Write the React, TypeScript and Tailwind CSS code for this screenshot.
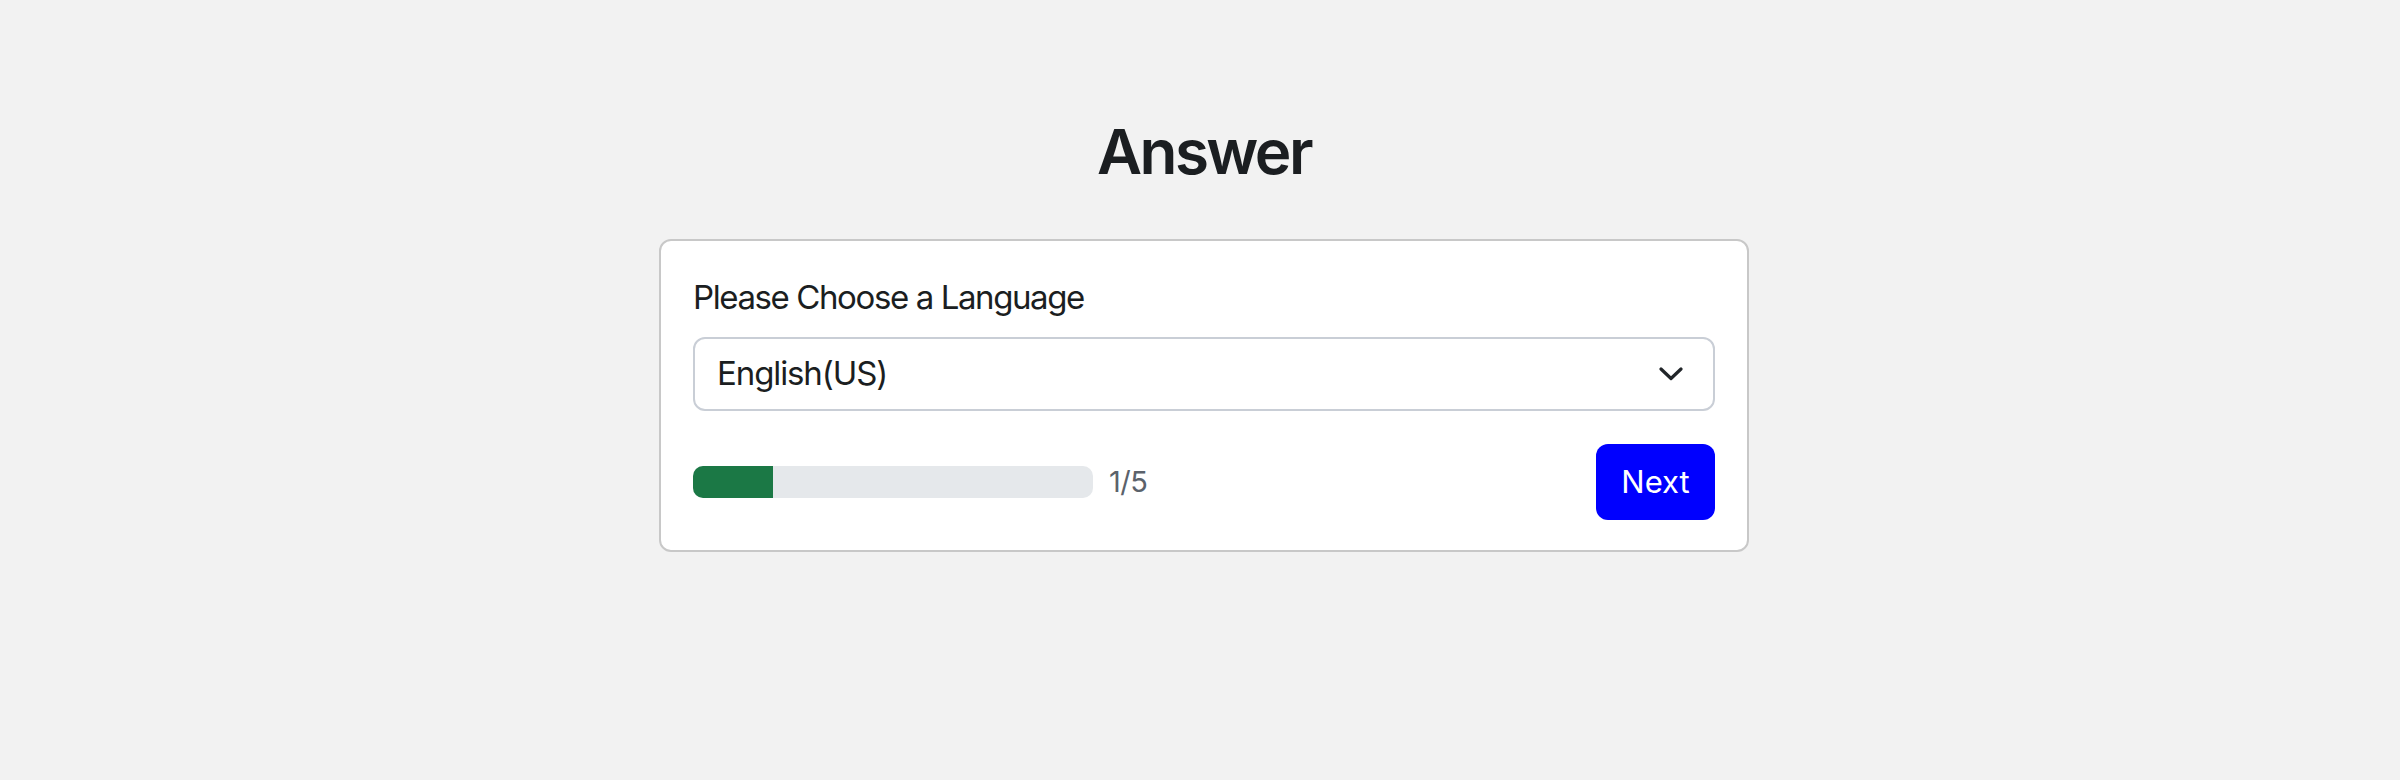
import React from "react";

export default function App() {
  const progress = 1 / 5;
  return (
    <div className="min-h-screen w-full bg-[#f2f2f2] pl-[8px]" style={{ fontFamily: "Inter, 'Liberation Sans', sans-serif" }}>
      <div className="flex flex-col items-center pt-[114px]">
        <h1 className="m-0 text-[62px] leading-[76px] font-semibold tracking-[-2.6px] text-[#1b1e21]">Answer</h1>
        <div className="mt-[49px] w-[1090px] rounded-[12px] border-2 border-[#c8c8c8] bg-white px-[32px] pt-[32px] pb-[30px]">
          <div className="text-[33px] leading-[48px] tracking-[-1.4px] text-[#1b1e21]">Please Choose a Language</div>
          <div className="mt-[16px] flex h-[74px] w-full items-center justify-between rounded-[12px] border-2 border-[#c9ced6] bg-white pl-[22px] pr-[30px]">
            <span className="text-[33px] tracking-[-1.1px] text-[#1b1e21]">English(US)</span>
            <svg width="24" height="14" viewBox="0 0 24 14" fill="none">
              <path d="M2 2 L12 11.5 L22 2" stroke="#212529" strokeWidth="3.2" strokeLinecap="round" strokeLinejoin="round" />
            </svg>
          </div>
          <div className="mt-[33px] flex items-center justify-between">
            <div className="flex items-center">
              <div className="h-[32px] w-[400px] overflow-hidden rounded-[10px] bg-[#e5e8eb]">
                <div className="h-full bg-[#1b7845]" style={{ width: `${progress * 100}%` }} />
              </div>
              <span className="ml-[16px] text-[29px] tracking-[-0.5px] text-[#5b626b]">1/5</span>
            </div>
            <button className="h-[76px] w-[119px] rounded-[12px] bg-[#0000ff] text-[31px] text-white">Next</button>
          </div>
        </div>
      </div>
    </div>
  );
}
